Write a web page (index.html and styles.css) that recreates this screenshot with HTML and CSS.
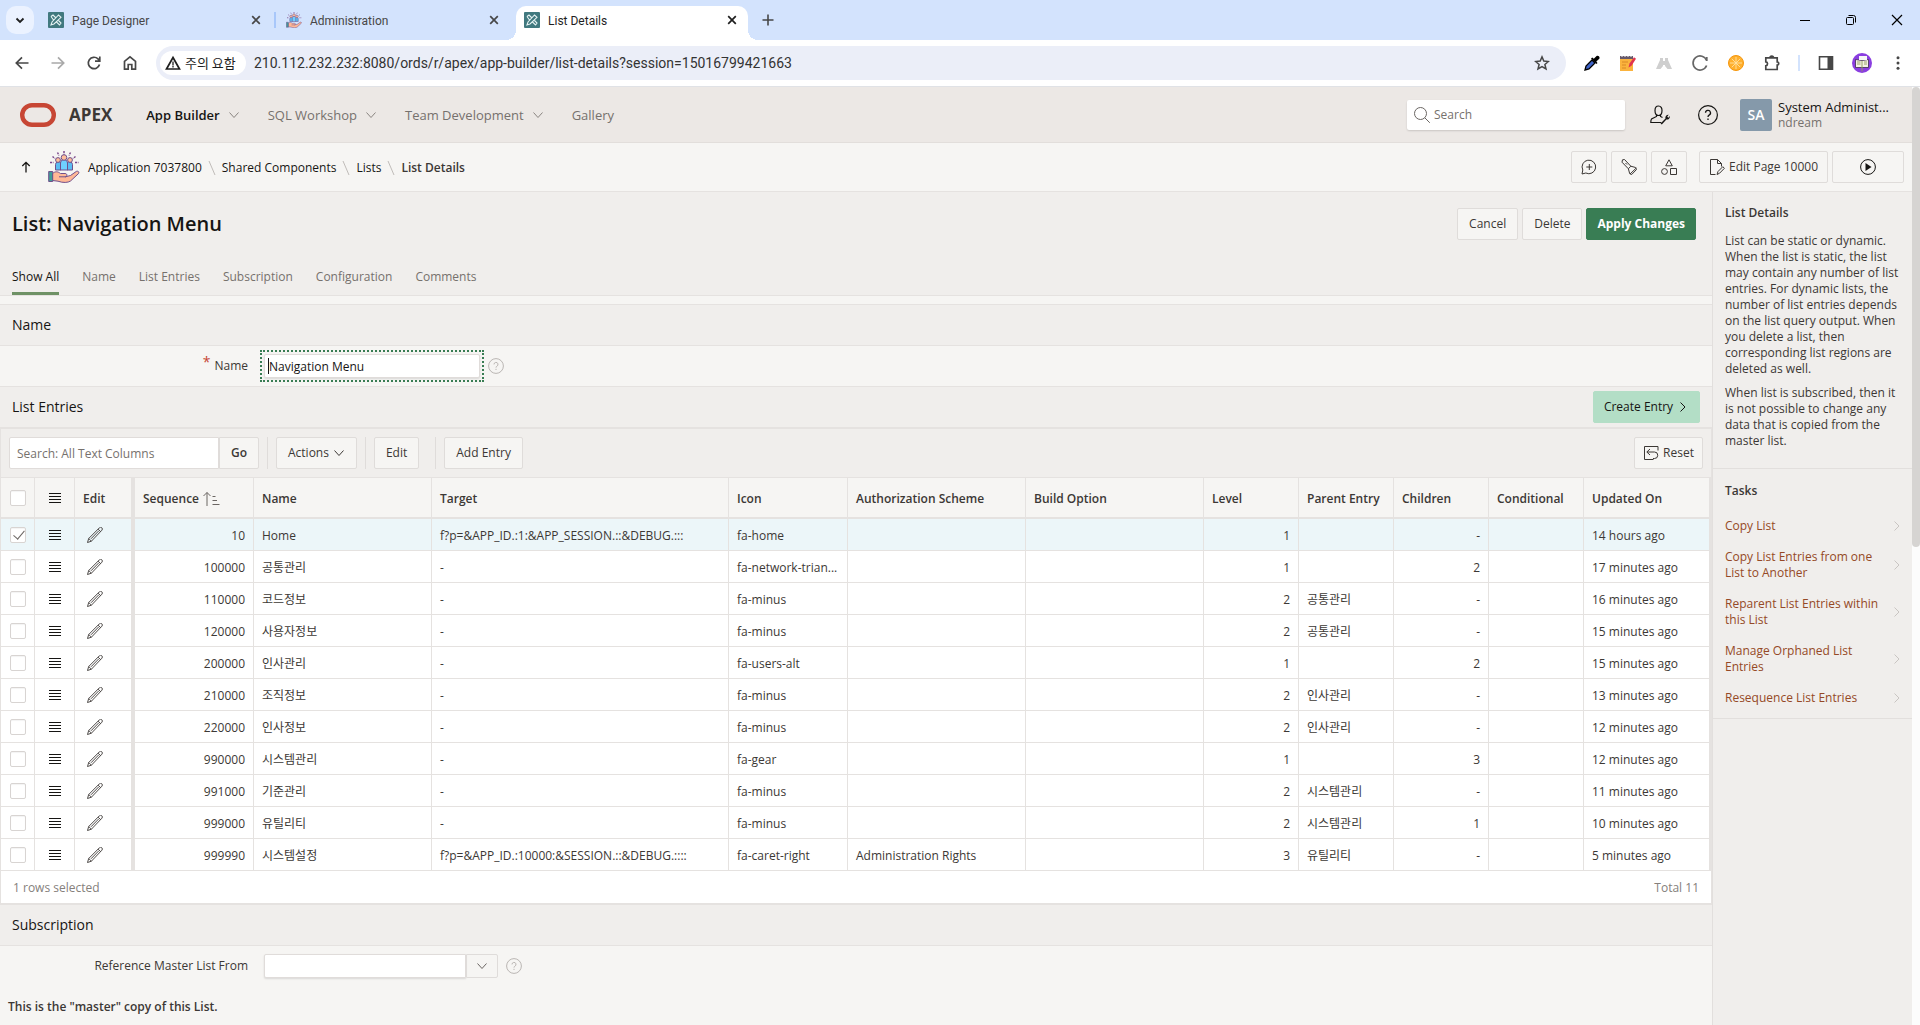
FILE: index.html
```html
<!DOCTYPE html>
<html lang="en">
<head>
<meta charset="utf-8">
<title>List Details</title>
<link rel="stylesheet" href="styles.css">
</head>
<body>
<svg class="sprite" aria-hidden="true">
  <symbol id="i-x" viewBox="0 0 16 16"><path d="M4.200 4.200l7.600 7.600M11.800 4.200l-7.600 7.600" stroke="currentColor" stroke-width="1.700"/></symbol>
  <symbol id="i-chev-down" viewBox="0 0 12 12"><path d="M1.500 3.500L6 8.500l4.500-5" fill="none" stroke="currentColor"/></symbol>
  <symbol id="i-chev-right" viewBox="0 0 12 12"><path d="M3.500 1.500L8 6l-4.500 4.500" fill="none" stroke="currentColor"/></symbol>
  <symbol id="i-slash" viewBox="0 0 8 16"><path d="M1 1l6 14" stroke="currentColor"/></symbol>
  <symbol id="i-menu" viewBox="0 0 16 16"><path d="M2 3.500h12M2 6.500h12M2 9.500h12M2 12.500h12" stroke="currentColor"/></symbol>
  <symbol id="i-pencil" viewBox="0 0 16 16"><path d="M.5 15.500l1.200-4L12.300.900a1.700 1.700 0 0 1 2.600 2.300L4.400 14.200zM1.700 11.500l2.700 2.700M11 2.200l2.700 2.400M4 11.800l7.600-7.800" fill="none" stroke="currentColor" stroke-width=".9"/></symbol>
  <symbol id="i-help" viewBox="0 0 16 16"><circle cx="8" cy="8" r="7.400" fill="none" stroke="currentColor"/><path d="M6 6.400a2 2 0 1 1 2.900 1.800c-.7.400-.9.700-.9 1.400M8 10.800v1.200" fill="none" stroke="currentColor"/></symbol>
  <symbol id="i-apex" viewBox="0 0 16 16"><rect width="16" height="16" rx="1" fill="#41797f"/><path d="M3 13l1-3 6.500-7 2.500 2.300L6 12zM3 4.500L5 3l3 3M10.500 8.500l2.500 2.500-1.500 2L8.500 10M5.500 8L3 4.500" fill="none" stroke="#e6f3f3" stroke-width="1.100"/></symbol>
  <symbol id="i-people" viewBox="0 0 32 32">
    <path d="M16 0v3.500M9.500 1.500l1.500 3M22.500 1.500l-1.500 3M4.500 5.500l2.500 2M27.500 5.500l-2.500 2M2 11.500h3.500M27 11.500h3.500" stroke="#7c4a8c" stroke-width="1.500" stroke-dasharray="2 .8"/>
    <g stroke="#70508c" stroke-width="1"><path d="M7.500 19v-5.500a3 3 0 0 1 5.500-1.500v7z" fill="#5bbcf2"/><path d="M24.500 19v-5.500a3 3 0 0 0-5.500-1.500v7z" fill="#5bbcf2"/><path d="M12.500 19v-7a3.500 3.500 0 0 1 7 0v7z" fill="#6fd0ff"/><circle cx="10" cy="9" r="2.400" fill="#ffc09c"/><circle cx="22" cy="9" r="2.400" fill="#ffc09c"/><circle cx="16" cy="6.500" r="2.800" fill="#ffc09c"/><path d="M4.500 22.500c3-2.500 5.500-2 8 0h4.500c2.500 0 2.500 3 .5 3.300l5-1.300 6-4.200c1.800-.6 3 1 2 2.300l-8 7.400c-2.500 1.800-7.500 2-12.500.200l-5.500-.7z" fill="#ffb896"/><path d="M11 25.800h7" /><path d="M.7 20.500h4v10h-4z" fill="#3f9d97"/></g>
  </symbol>
</svg>

<div class="tabstrip">
  <button class="tab-search" type="button" aria-label="Search tabs"><svg class="i16" viewBox="0 0 16 16"><path d="M4.500 6.500L8 10l3.500-3.500" fill="none" stroke="#1f1f1f" stroke-width="1.800"/></svg></button>
  <div class="tabs" role="tablist">
    <div class="tab"><svg class="i16"><use href="#i-apex"/></svg><span>Page Designer</span><button type="button" aria-label="Close tab"><svg class="i16"><use href="#i-x"/></svg></button></div>
    <div class="tab tab-divided"><svg class="i16"><use href="#i-people"/></svg><span>Administration</span><button type="button" aria-label="Close tab"><svg class="i16"><use href="#i-x"/></svg></button></div>
    <div class="tab tab-active"><svg class="i16"><use href="#i-apex"/></svg><span>List Details</span><button type="button" aria-label="Close tab"><svg class="i16"><use href="#i-x"/></svg></button></div>
  </div>
  <button class="tab-new" type="button" aria-label="New tab"><svg class="i16" viewBox="0 0 16 16"><path d="M8 2.500v11M2.500 8h11" stroke="#474747" stroke-width="1.600"/></svg></button>
  <div class="window-controls">
    <button type="button" aria-label="Minimize"><svg viewBox="0 0 12 12"><path d="M1 6.500h10" stroke="#000"/></svg></button>
    <button type="button" aria-label="Restore"><svg viewBox="0 0 12 12"><rect x="1.500" y="3.500" width="7" height="7" rx="1" fill="none" stroke="#000"/><path d="M3.500 1.500h5a2 2 0 0 1 2 2v5" fill="none" stroke="#000"/></svg></button>
    <button type="button" aria-label="Close"><svg viewBox="0 0 12 12"><path d="M1 1l10 10M11 1L1 11" stroke="#000" stroke-width="1.200"/></svg></button>
  </div>
</div>

<div class="toolbar">
  <button type="button" aria-label="Back"><svg class="i16" viewBox="0 0 16 16"><path d="M14.500 8H2.500M8 2.300L2.300 8 8 13.700" fill="none" stroke="#474747" stroke-width="1.700"/></svg></button>
  <button type="button" aria-label="Forward"><svg class="i16" viewBox="0 0 16 16"><path d="M1.500 8h12M8 2.300L13.700 8 8 13.700" fill="none" stroke="#a9a9a9" stroke-width="1.700"/></svg></button>
  <button type="button" aria-label="Reload"><svg class="i16" viewBox="0 0 16 16"><path d="M13.500 9.500A5.700 5.700 0 1 1 12 3.900l1.500 1.600M13.800 1.500v4.700H9" fill="none" stroke="#474747" stroke-width="1.700"/></svg></button>
  <button type="button" aria-label="Home"><svg class="i16" viewBox="0 0 16 16"><path d="M2.500 6.300L8 1.900l5.500 4.400v7.900h-3.700V9.500H6.200v4.700H2.500z" fill="none" stroke="#474747" stroke-width="1.700"/></svg></button>
  <div class="omnibox">
    <button class="chip" type="button"><svg class="i16" viewBox="0 0 16 16"><path d="M8 2.500L14.500 14h-13z" fill="none" stroke="#1f1f1f" stroke-width="1.700"/><path d="M8 6.500v4M8 11v1.500" stroke="#1f1f1f" stroke-width="1.300"/></svg><span>주의 요함</span></button>
    <input class="url" type="text" aria-label="Address" value="210.112.232.232:8080/ords/r/apex/app-builder/list-details?session=15016799421663">
    <button class="star" type="button" aria-label="Bookmark"><svg class="i16" viewBox="0 0 16 16"><path d="M8 1.900l1.800 4.200 4.600.400-3.500 3 1.100 4.500L8 11.600 4 14l1.100-4.500-3.500-3 4.600-.4z" fill="none" stroke="#474747" stroke-width="1.500"/></svg></button>
  </div>
  <div class="extensions">
    <button type="button" aria-label="Color picker"><svg class="i16" viewBox="0 0 16 16"><path d="M1 15l1-4 6-6 3 3-6 6z" fill="#3e63c8" stroke="#000" stroke-width="1.300"/><path d="M7 3.500L12.500 9l1-1-1.200-1.500 3-2.800c1-1.700-1-3.700-2.700-2.800L9.800 3.700 8.300 2.500z" fill="#000"/></svg></button>
    <button type="button" aria-label="Notes"><svg class="i16" viewBox="0 0 16 16"><path d="M0 3h13v13H0z" fill="#fbb33d"/><path d="M0 1h13v3H0z" fill="#675a6b"/><path d="M2 0v2M5 0v2M8 0v2M11 0v2" stroke="#fff"/><path d="M2 7h6M2 10h4M2 13h4" stroke="#d98a26"/><path d="M8.500 12.500l1-4L14 2.200l2 1.500-4.500 7z" fill="#e0344f"/></svg></button>
    <button type="button" aria-label="Compare"><svg class="i16" viewBox="0 0 16 16"><path d="M4 3h3v2H4zM9 3h3v2H9zM4 5h3v6l-2.500 3H0zM9 5h3l4 9h-4.500L9 11zM7 6h2v4H7z" fill="#cfcfcf"/></svg></button>
    <button type="button" aria-label="Refresh"><svg class="i16" viewBox="0 0 16 16"><path d="M14.600 5.500A7 7 0 1 0 14.600 10.500M14.800 2v4" fill="none" stroke="#666" stroke-width="1.700"/></svg></button>
    <button type="button" aria-label="Orange"><svg class="i16" viewBox="0 0 16 16"><circle cx="8" cy="8" r="7.500" fill="#ffb02e" stroke="#f5960c"/><path d="M8 2v12M2 8h12M3.800 3.800l8.400 8.400M12.200 3.800l-8.400 8.400" stroke="#ffe2a4" stroke-width=".9"/></svg></button>
    <button type="button" aria-label="Extensions"><svg class="i16" viewBox="0 0 16 16"><path d="M1.800 2.800h11.400v4.200c2 0 2 3.200 0 3.200v4.300H1.800v-3.700c2.300-.2 2.300-3.800 0-4zM6 2.800c0-2.200 3.500-2.200 3.500 0" fill="none" stroke="#474747" stroke-width="1.700"/></svg></button>
    <span class="ext-divider"></span>
    <button type="button" aria-label="Side panel"><svg class="i16" viewBox="0 0 16 16"><path d="M1.500 1.800h13v12.400h-13z" fill="none" stroke="#474747" stroke-width="1.600"/><path d="M9.500 1.500h5v13h-5z" fill="#474747"/></svg></button>
    <button type="button" aria-label="Profile"><svg class="i20" viewBox="0 0 20 20"><circle cx="10" cy="10" r="10" fill="#8a3ee0"/><path d="M3.500 6.500l6.500 1 6.500-1v8H3.500z" fill="#f4f1e4" stroke="#3c2b4f" stroke-width=".8"/><path d="M7 3h8v4H7z" fill="#f7f7f7"/><path d="M10 7.500v11M5 9h3.500M5 11h3.500M12 9h3M12 11h3" stroke="#8f9d5a" stroke-width=".9"/></svg></button>
    <button type="button" aria-label="Menu"><svg class="i16" viewBox="0 0 16 16"><g fill="#474747"><circle cx="8" cy="2.700" r="1.500"/><circle cx="8" cy="8" r="1.500"/><circle cx="8" cy="13.300" r="1.500"/></g></svg></button>
  </div>
</div>

<div class="viewport">
<div class="page">
  <header class="header">
    <a class="brand" href="#"><svg viewBox="0 0 36 24"><rect x="2.200" y="2.200" width="31.600" height="19.600" rx="9.800" fill="none" stroke="#c74634" stroke-width="4.400"/></svg><span>APEX</span></a>
    <nav class="mainnav">
      <a class="current" href="#">App Builder <svg class="i12"><use href="#i-chev-down"/></svg></a>
      <a href="#">SQL Workshop <svg class="i12"><use href="#i-chev-down"/></svg></a>
      <a href="#">Team Development <svg class="i12"><use href="#i-chev-down"/></svg></a>
      <a href="#">Gallery</a>
    </nav>
    <div class="search"><svg class="i16" viewBox="0 0 16 16"><circle cx="6.500" cy="6.500" r="6" fill="none" stroke="#6b6663"/><path d="M10.800 10.800l5 5" stroke="#6b6663"/></svg><input type="search" placeholder="Search" aria-label="Search"></div>
    <button class="head-icon" type="button" aria-label="Administration"><svg class="i20" viewBox="0 0 20 20"><path d="M8.500 1C6 1 5 3 5 5.500s1.200 5 3.500 5S12 8 12 5.500 11 1 8.500 1zM6.500 10v1.500L1.500 14C.8 15 .8 16 .8 17.500h10.500M10.500 10v1.500l2 1" fill="none" stroke="#161513" stroke-width="1.200"/><path d="M10.500 18.500l5-5a3 3 0 0 1 3.200-3.800l-1.500 2 1.200 1 1.500-1.700a3 3 0 0 1-3.500 3.500l-4.600 5z" fill="#161513"/></svg></button>
    <button class="head-icon" type="button" aria-label="Help"><svg class="i20" viewBox="0 0 20 20"><circle cx="10" cy="10" r="9.400" fill="none" stroke="#161513" stroke-width="1.200"/><path d="M7.500 7.800a2.500 2.500 0 1 1 3.600 2.300c-.8.500-1.100.9-1.100 1.900M10 13.500V15" fill="none" stroke="#161513" stroke-width="1.300"/></svg></button>
    <button class="user" type="button"><span class="avatar">SA</span><span class="user-text"><span class="user-name">System Administ...</span><span class="user-ws">ndream</span></span></button>
  </header>

  <div class="crumbbar">
    <a class="up" href="#" aria-label="Up"><svg class="i12" viewBox="0 0 12 12"><path d="M6 11.500V1.500M2.300 5L6 1.300 9.700 5" fill="none" stroke="#161513" stroke-width="1.300"/></svg></a>
    <svg class="app-icon"><use href="#i-people"/></svg>
    <nav class="crumbs">
      <a href="#">Application 7037800</a><svg><use href="#i-slash"/></svg>
      <a href="#">Shared Components</a><svg><use href="#i-slash"/></svg>
      <a href="#">Lists</a><svg><use href="#i-slash"/></svg>
      <strong>List Details</strong>
    </nav>
    <div class="page-tools">
      <button class="btn square" type="button" aria-label="Feedback"><svg class="i16" viewBox="0 0 16 16"><path d="M1 15l.8-4A6.800 6.800 0 1 1 4.800 14zM8.300 5v6M5.300 8h6" fill="none" stroke="currentColor"/></svg></button>
      <button class="btn square" type="button" aria-label="Find"><svg class="i16" viewBox="0 0 16 16"><path d="M1.500.8l2-.3L9.800 7.200l4.800 1.300.9 2-4.800 5-2-.8-1.300-4.900L1 3.200zM7.400 9.800l2.400-2.600M9 15l6.300-6M4.500 4l1.500 1.500" fill="none" stroke="currentColor"/></svg></button>
      <button class="btn square" type="button" aria-label="Shared components"><svg class="i16" viewBox="0 0 16 16"><path d="M8 .8l3.300 6H4.700zM9.500 9.500h6v6h-6z" fill="none" stroke="currentColor"/><circle cx="3.500" cy="12.500" r="2.900" fill="none" stroke="currentColor"/></svg></button>
      <button class="btn edit-page" type="button"><svg class="i16" viewBox="0 0 16 16"><path d="M6.500 15.500h-5V.5h7l4 4v3M8.500.5v4h4M8 15.500l1-3 4.800-4.800 1.600 1.600-4.800 4.900z" fill="none" stroke="currentColor"/></svg>Edit Page 10000</button>
      <button class="btn run" type="button" aria-label="Run page"><svg class="i16" viewBox="0 0 16 16"><circle cx="8" cy="8" r="7.400" fill="none" stroke="#161513"/><path d="M5.500 4l6 4-6 4z" fill="#161513"/></svg></button>
    </div>
  </div>

  <div class="columns">
  <main class="main">
    <div class="title-area">
      <div class="title-row">
        <h1>List: Navigation Menu</h1>
        <button class="btn" type="button">Cancel</button>
        <button class="btn" type="button">Delete</button>
        <button class="btn hot" type="button">Apply Changes</button>
      </div>
      <nav class="subtabs">
        <a class="current" href="#">Show All</a><a href="#">Name</a><a href="#">List Entries</a><a href="#">Subscription</a><a href="#">Configuration</a><a href="#">Comments</a>
      </nav>
    </div>

    <section>
      <div class="region-head"><h2>Name</h2></div>
      <div class="field">
        <label for="list-name"><span class="required">*</span>Name</label>
        <span class="focus-field"><input id="list-name" type="text" value="Navigation Menu"><span class="caret"></span></span>
        <button class="help" type="button" aria-label="Help"><svg class="i16"><use href="#i-help"/></svg></button>
      </div>
    </section>

    <section>
      <div class="region-head"><h2>List Entries</h2><button class="btn create" type="button">Create Entry <svg class="i12"><use href="#i-chev-right"/></svg></button></div>
      <div class="grid">
        <div class="grid-tools">
          <input class="grid-search" type="text" placeholder="Search: All Text Columns" aria-label="Search all text columns"><button class="btn go" type="button">Go</button>
          <span class="rule"></span>
          <button class="btn" type="button">Actions <svg class="i12"><use href="#i-chev-down"/></svg></button>
          <span class="rule"></span>
          <button class="btn" type="button">Edit</button>
          <span class="rule wide"></span>
          <button class="btn" type="button">Add Entry</button>
          <button class="btn reset" type="button"><svg class="i16" viewBox="0 0 16 16"><path d="M15 5.500V1.500H1.500v13h9M7 4L3.800 7 7 10M4 7h7.500a3.200 3.200 0 0 1 0 6.500H10" fill="none" stroke="currentColor"/></svg>Reset</button>
        </div>
        <table>
          <colgroup><col class="c-check"><col class="c-menu"><col class="c-edit"><col class="c-m"><col class="c-l"><col><col class="c-m"><col class="c-l"><col class="c-l"><col class="c-s"><col class="c-s"><col class="c-s"><col class="c-s"><col class="c-date"></colgroup>
          <thead><tr><th class="ck"><input type="checkbox" aria-label="Select all"></th><th class="ic"><svg class="i16"><use href="#i-menu"/></svg></th><th class="frozen">Edit</th><th>Sequence <svg class="sort" viewBox="0 0 18 16"><path d="M5 15V1.500M1.500 5L5 1.500 8.500 5M10.500 5.500h3M10.500 9.500h4.500M10.500 13.500h7" fill="none" stroke="#6b6663"/></svg></th><th>Name</th><th>Target</th><th>Icon</th><th>Authorization Scheme</th><th>Build Option</th><th>Level</th><th>Parent Entry</th><th>Children</th><th>Conditional</th><th>Updated On</th></tr></thead>
          <tbody>
            <tr class="selected"><td class="ck"><input type="checkbox" aria-label="Select row" checked></td><td class="ic"><svg class="i16"><use href="#i-menu"/></svg></td><td class="frozen"><svg class="i16"><use href="#i-pencil"/></svg></td><td class="num">10</td><td>Home</td><td>f?p=&amp;APP_ID.:1:&amp;APP_SESSION.::&amp;DEBUG.:::</td><td>fa-home</td><td></td><td></td><td class="num">1</td><td></td><td class="num">-</td><td></td><td>14 hours ago</td></tr>
            <tr><td class="ck"><input type="checkbox" aria-label="Select row"></td><td class="ic"><svg class="i16"><use href="#i-menu"/></svg></td><td class="frozen"><svg class="i16"><use href="#i-pencil"/></svg></td><td class="num">100000</td><td>공통관리</td><td>-</td><td>fa-network-trian...</td><td></td><td></td><td class="num">1</td><td></td><td class="num">2</td><td></td><td>17 minutes ago</td></tr>
            <tr><td class="ck"><input type="checkbox" aria-label="Select row"></td><td class="ic"><svg class="i16"><use href="#i-menu"/></svg></td><td class="frozen"><svg class="i16"><use href="#i-pencil"/></svg></td><td class="num">110000</td><td>코드정보</td><td>-</td><td>fa-minus</td><td></td><td></td><td class="num">2</td><td>공통관리</td><td class="num">-</td><td></td><td>16 minutes ago</td></tr>
            <tr><td class="ck"><input type="checkbox" aria-label="Select row"></td><td class="ic"><svg class="i16"><use href="#i-menu"/></svg></td><td class="frozen"><svg class="i16"><use href="#i-pencil"/></svg></td><td class="num">120000</td><td>사용자정보</td><td>-</td><td>fa-minus</td><td></td><td></td><td class="num">2</td><td>공통관리</td><td class="num">-</td><td></td><td>15 minutes ago</td></tr>
            <tr><td class="ck"><input type="checkbox" aria-label="Select row"></td><td class="ic"><svg class="i16"><use href="#i-menu"/></svg></td><td class="frozen"><svg class="i16"><use href="#i-pencil"/></svg></td><td class="num">200000</td><td>인사관리</td><td>-</td><td>fa-users-alt</td><td></td><td></td><td class="num">1</td><td></td><td class="num">2</td><td></td><td>15 minutes ago</td></tr>
            <tr><td class="ck"><input type="checkbox" aria-label="Select row"></td><td class="ic"><svg class="i16"><use href="#i-menu"/></svg></td><td class="frozen"><svg class="i16"><use href="#i-pencil"/></svg></td><td class="num">210000</td><td>조직정보</td><td>-</td><td>fa-minus</td><td></td><td></td><td class="num">2</td><td>인사관리</td><td class="num">-</td><td></td><td>13 minutes ago</td></tr>
            <tr><td class="ck"><input type="checkbox" aria-label="Select row"></td><td class="ic"><svg class="i16"><use href="#i-menu"/></svg></td><td class="frozen"><svg class="i16"><use href="#i-pencil"/></svg></td><td class="num">220000</td><td>인사정보</td><td>-</td><td>fa-minus</td><td></td><td></td><td class="num">2</td><td>인사관리</td><td class="num">-</td><td></td><td>12 minutes ago</td></tr>
            <tr><td class="ck"><input type="checkbox" aria-label="Select row"></td><td class="ic"><svg class="i16"><use href="#i-menu"/></svg></td><td class="frozen"><svg class="i16"><use href="#i-pencil"/></svg></td><td class="num">990000</td><td>시스템관리</td><td>-</td><td>fa-gear</td><td></td><td></td><td class="num">1</td><td></td><td class="num">3</td><td></td><td>12 minutes ago</td></tr>
            <tr><td class="ck"><input type="checkbox" aria-label="Select row"></td><td class="ic"><svg class="i16"><use href="#i-menu"/></svg></td><td class="frozen"><svg class="i16"><use href="#i-pencil"/></svg></td><td class="num">991000</td><td>기준관리</td><td>-</td><td>fa-minus</td><td></td><td></td><td class="num">2</td><td>시스템관리</td><td class="num">-</td><td></td><td>11 minutes ago</td></tr>
            <tr><td class="ck"><input type="checkbox" aria-label="Select row"></td><td class="ic"><svg class="i16"><use href="#i-menu"/></svg></td><td class="frozen"><svg class="i16"><use href="#i-pencil"/></svg></td><td class="num">999000</td><td>유틸리티</td><td>-</td><td>fa-minus</td><td></td><td></td><td class="num">2</td><td>시스템관리</td><td class="num">1</td><td></td><td>10 minutes ago</td></tr>
            <tr><td class="ck"><input type="checkbox" aria-label="Select row"></td><td class="ic"><svg class="i16"><use href="#i-menu"/></svg></td><td class="frozen"><svg class="i16"><use href="#i-pencil"/></svg></td><td class="num">999990</td><td>시스템설정</td><td>f?p=&amp;APP_ID.:10000:&amp;SESSION.::&amp;DEBUG.::::</td><td>fa-caret-right</td><td>Administration Rights</td><td></td><td class="num">3</td><td>유틸리티</td><td class="num">-</td><td></td><td>5 minutes ago</td></tr>
          </tbody>
        </table>
        <div class="grid-foot"><span>1 rows selected</span><span>Total 11</span></div>
      </div>
    </section>

    <section>
      <div class="region-head"><h2>Subscription</h2></div>
      <div class="field">
        <label for="master">Reference Master List From</label>
        <span class="combo"><input id="master" type="text"><button type="button" aria-label="Open list"><svg class="i12"><use href="#i-chev-down"/></svg></button></span>
        <button class="help" type="button" aria-label="Help"><svg class="i16"><use href="#i-help"/></svg></button>
      </div>
      <p class="note">This is the "master" copy of this List.</p>
    </section>
  </main>

  <aside class="side">
    <section class="about">
      <h3>List Details</h3>
      <p>List can be static or dynamic. When the list is static, the list may contain any number of list entries. For dynamic lists, the number of list entries depends on the list query output. When you delete a list, then corresponding list regions are deleted as well.</p>
      <p>When list is subscribed, then it is not possible to change any data that is copied from the master list.</p>
    </section>
    <section class="tasks">
      <h3>Tasks</h3>
      <ul>
        <li><a href="#"><span>Copy List</span><svg class="i12"><use href="#i-chev-right"/></svg></a></li>
        <li><a href="#"><span>Copy List Entries from one List to Another</span><svg class="i12"><use href="#i-chev-right"/></svg></a></li>
        <li><a href="#"><span>Reparent List Entries within this List</span><svg class="i12"><use href="#i-chev-right"/></svg></a></li>
        <li><a href="#"><span>Manage Orphaned List Entries</span><svg class="i12"><use href="#i-chev-right"/></svg></a></li>
        <li><a href="#"><span>Resequence List Entries</span><svg class="i12"><use href="#i-chev-right"/></svg></a></li>
      </ul>
    </section>
  </aside>
  </div>
</div>
<div class="scrollbar"><div class="thumb"></div></div>
</div>
</body>
</html>
```
FILE: styles.css
```css
* { box-sizing: border-box; }
body {
  margin: 0;
  height: 100vh;
  display: flex;
  flex-direction: column;
  overflow: hidden;
  background: #fff;
  color: #3c3835;
  font: 12px/16px "Open Sans", "Noto Sans CJK KR", sans-serif;
}
button, input { font: inherit; color: inherit; margin: 0; }
button { border: 0; padding: 0; background: none; }
a { color: inherit; text-decoration: none; }
h1, h2, h3, p, ul { margin: 0; padding: 0; }
ul { list-style: none; }
svg { display: block; flex: none; }
.sprite { position: absolute; width: 0; height: 0; }
.i12 { width: 12px; height: 12px; }
.i16 { width: 16px; height: 16px; }
.i20 { width: 20px; height: 20px; }

/* browser tabs */
.tabstrip {
  flex: none;
  display: flex;
  height: 40px;
  padding-left: 6px;
  background: #d3e3fd;
  font-family: Roboto, "Noto Sans CJK KR", sans-serif;
}
.tab-search {
  width: 28px;
  height: 28px;
  margin-top: 6px;
  display: grid;
  place-items: center;
  border-radius: 10px;
  background: #ebf2ff;
}
.tabs { display: flex; margin-left: 6px; padding-top: 6px; }
.tab {
  position: relative;
  display: flex;
  align-items: center;
  gap: 8px;
  width: 238px;
  height: 34px;
  padding: 0 14px 6px 8px;
  color: #474747;
}
.tab span { flex: 1; padding-top: 2px; }
.tab-divided::before {
  content: "";
  position: absolute;
  left: -4px;
  top: 6px;
  width: 2px;
  height: 16px;
  background: #a8c7fa;
}
.tab-active {
  width: 232px;
  padding-right: 8px;
  border-radius: 10px 10px 0 0;
  background: #fff;
  color: #1f1f1f;
}
.tab-active::before, .tab-active::after {
  content: "";
  position: absolute;
  bottom: 0;
  width: 10px;
  height: 10px;
}
.tab-active::before { left: -10px; background: radial-gradient(circle at 0 0, #d3e3fd 10px, #fff 10px); }
.tab-active::after { right: -10px; background: radial-gradient(circle at 100% 0, #d3e3fd 10px, #fff 10px); }
.tab-new { width: 28px; height: 40px; margin-left: 6px; display: grid; place-items: center; }
.window-controls { display: flex; margin-left: auto; }
.window-controls button { width: 46px; height: 40px; display: grid; place-items: center; }
.window-controls svg { width: 12px; height: 12px; }

/* address bar */
.toolbar {
  flex: none;
  display: flex;
  align-items: center;
  height: 47px;
  padding: 0 4px;
  border-bottom: 1px solid #e0e2e6;
  background: #fff;
}
.toolbar > button, .extensions button { width: 36px; height: 34px; display: grid; place-items: center; }
.omnibox {
  flex: 1;
  display: flex;
  align-items: center;
  height: 34px;
  margin: 0 8px;
  padding: 0 16px 0 4px;
  border-radius: 17px;
  background: #ebeef8;
}
.chip {
  display: flex;
  align-items: center;
  gap: 4px;
  width: 86px;
  height: 24px;
  padding: 0 5px;
  border-radius: 12px;
  background: #fff;
  color: #1f1f1f;
  font: 13px/16px "Noto Sans CJK KR", sans-serif;
  white-space: nowrap;
}
.url {
  flex: 1;
  padding: 0;
  margin-left: 8px;
  border: 0;
  background: none;
  color: #333;
  font: 14px/20px Roboto, sans-serif;
}
.extensions { display: flex; align-items: center; }
.ext-divider { width: 2px; height: 16px; margin: 0 8px; background: #d3e3fd; }

/* page and its scroll bar */
.viewport { flex: 1; min-height: 0; display: flex; }
.page { flex: 1; min-width: 0; display: flex; flex-direction: column; background: #f6f5f3; }
.scrollbar { width: 8px; background: #fcfcfc; }
.thumb { height: 49%; border-radius: 4px; background: #d6d4d2; }

.header {
  flex: none;
  display: flex;
  align-items: center;
  height: 56px;
  padding: 0 8px 0 20px;
  border-bottom: 1px solid #e2dedb;
  background: #ece8e5;
  font-size: 13px;
}
.brand { display: flex; align-items: center; gap: 13px; color: #3c3835; font-size: 17px; font-weight: 700; }
.brand svg { width: 36px; height: 24px; }
.mainnav { display: flex; gap: 28px; margin-left: 34px; margin-right: auto; color: #76716d; }
.mainnav a { display: flex; align-items: center; gap: 8px; padding-top: 1px; }
.mainnav .current { color: #161513; font-weight: 600; }
.mainnav svg { color: #8a8581; }
.search {
  display: flex;
  align-items: center;
  width: 218px;
  height: 30px;
  padding: 0 7px;
  border-radius: 2px;
  background: #fff;
  box-shadow: 0 1px 2px #00000026;
}
.search input { flex: 1; min-width: 0; padding: 0 4px; border: 0; outline: 0; background: none; font-size: 12px; }
::placeholder { color: #76716d; opacity: 1; }
.head-icon { width: 48px; height: 32px; display: grid; place-items: center; }
.search + .head-icon { margin-left: 11px; }
.user { display: flex; align-items: center; gap: 6px; margin-left: 8px; text-align: left; }
.avatar {
  width: 32px;
  height: 32px;
  display: grid;
  place-items: center;
  border-radius: 2px;
  background: #8599aa;
  color: #fff;
  font-size: 14px;
  font-weight: 600;
}
.user-text { display: flex; flex-direction: column; width: 126px; white-space: nowrap; }
.user-name { color: #161513; font-size: 13px; font-weight: 500; }
.user-ws { color: #76716d; font-size: 12px; }

.crumbbar {
  flex: none;
  display: flex;
  align-items: center;
  height: 49px;
  padding: 0 8px 0 20px;
  border-bottom: 1px solid #e5e2e0;
  color: #161513;
}
.app-icon { width: 32px; height: 32px; margin-left: 16px; }
.crumbs { display: flex; align-items: center; gap: 6px; margin: 0 auto 0 8px; padding-top: 2px; }
.crumbs svg { width: 8px; height: 16px; color: #c0bcb9; }
.crumbs strong { color: #3c3835; font-weight: 600; }
.page-tools { display: flex; gap: 4px; }

.btn {
  display: inline-flex;
  align-items: center;
  justify-content: center;
  gap: 4px;
  height: 32px;
  padding: 0 11px;
  border: 1px solid #dfdcda;
  border-radius: 2px;
  background: #f6f5f3;
  color: #3c3835;
  white-space: nowrap;
}
.square { width: 36px; padding: 0; }
.edit-page { margin-left: 8px; width: 129px; }
.run { width: 72px; }
.hot { border-color: #397d54; background: #397d54; color: #fff; font-weight: 700; padding: 0 10px; }
.create { border-color: #b3dec6; background: #b3dec6; color: #161513; width: 107px; }

.columns { flex: 1; min-height: 0; display: flex; }
.main { flex: 1; min-width: 0; }
.title-area { padding: 16px 16px 0 12px; border-bottom: 1px solid #e5e2e0; margin-bottom: 8px; background: #f0eeec; }
.title-row { display: flex; align-items: center; gap: 4px; }
h1 { margin-right: auto; color: #161513; font-size: 20px; font-weight: 600; line-height: 32px; }
.subtabs { display: flex; gap: 23px; margin-top: 19px; color: #76716d; }
.subtabs a { display: flex; align-items: center; height: 36px; padding-top: 3px; border-bottom: 3px solid transparent; }
.subtabs .current { border-color: #6f9266; color: #161513; }

.region-head {
  display: flex;
  align-items: center;
  justify-content: space-between;
  height: 42px;
  padding: 0 12px;
  border-top: 1px solid #e5e2e0;
  border-bottom: 1px solid #e5e2e0;
  background: #f0eeec;
}
h2 { color: #161513; font-size: 14px; font-weight: 500; }
.field { display: flex; align-items: center; height: 40px; }
.field label { display: flex; justify-content: flex-end; gap: 4px; width: 264px; padding-right: 16px; }
.required { color: #c74634; font-size: 14px; line-height: 8px; }
.focus-field { position: relative; width: 216px; height: 24px; outline: 2px dotted #397d54; outline-offset: 2px; }
.field input {
  width: 100%;
  height: 24px;
  padding: 0 4px;
  border: 1px solid #e0dcda;
  border-radius: 2px;
  background: #fff;
  box-shadow: 0 1px 2px #0000001f;
  color: #161513;
}
.caret { position: absolute; left: 4px; top: 4px; width: 1px; height: 16px; background: #161513; }
.help { margin-left: 8px; color: #bab6b3; }
.combo { display: flex; width: 234px; }
.combo input { flex: 1; min-width: 0; border-radius: 2px 0 0 2px; }
.combo button { display: grid; place-items: center; width: 32px; height: 24px; border: 1px solid #dfdcda; border-radius: 0 2px 2px 0; color: #6b6663; }
.note { padding: 13px 8px; font-weight: 600; }

/* entries grid */
.grid { border: 1px solid #e5e2e0; background: #fff; }
.grid-tools { display: flex; align-items: center; height: 49px; padding: 0 8px; border-bottom: 1px solid #e5e2e0; background: #f0eeec; }
.grid-search { width: 210px; height: 32px; padding: 0 7px; border: 1px solid #e0dcda; border-radius: 2px 0 0 2px; background: #fff; }
.go { width: 40px; border-radius: 0 2px 2px 0; font-weight: 600; }
.rule { width: 1px; height: 32px; margin: 0 8px; background: #dfdcda; }
.rule.wide { margin-left: 16px; }
.reset { margin-left: auto; padding: 0 8px; }
table { width: 100%; table-layout: fixed; border-collapse: separate; border-spacing: 0; }
.c-check { width: 34px; }
.c-menu { width: 40px; }
.c-edit { width: 60px; }
.c-s { width: 95px; }
.c-m { width: 119px; }
.c-l { width: 178px; }
.c-date { width: 127px; }
th, td {
  height: 32px;
  padding: 2px 8px 0;
  overflow: hidden;
  border-right: 1px solid #e5e2e0;
  border-bottom: 1px solid #e5e2e0;
  text-align: left;
  text-overflow: ellipsis;
  white-space: nowrap;
}
th { height: 41px; border-bottom-width: 2px; background: #f6f5f3; font-weight: 600; }
th:last-child, td:last-child { border-right-width: 2px; }
.frozen { border-right-width: 4px; }
td.frozen { padding: 0 12px; }
.ic { padding: 0 12px; color: #161513; }
.ck { padding: 0 9px; }
.num { text-align: right; }
.sort { display: inline-block; width: 18px; height: 16px; vertical-align: -4px; }
.selected td { background: #ecf6f9; }
input[type="checkbox"] {
  appearance: none;
  display: block;
  width: 16px;
  height: 16px;
  border: 1px solid #d8d4d2;
  border-radius: 2px;
  background: #fff;
  box-shadow: inset 0 1px 1px #0000000d;
}
input[type="checkbox"]:checked::before {
  content: "";
  display: block;
  width: 5px;
  height: 10px;
  margin: 0 0 0 5px;
  border: solid #6b6663;
  border-width: 0 1px 1px 0;
  transform: rotate(40deg);
}
.grid-foot { display: flex; justify-content: space-between; padding: 9px 12px 7px; color: #85807c; }

/* help and tasks */
.side { width: 200px; border-left: 1px solid #e2dfdd; background: #f0eeec; }
.side h3 { font-size: 12px; font-weight: 600; line-height: 16px; }
.about { padding: 13px 8px 19px 12px; border-bottom: 1px solid #e2dfdd; }
.about h3 { margin-bottom: 12px; }
.about p + p { margin-top: 8px; }
.tasks { padding: 14px 0 4px; border-bottom: 1px solid #e2dfdd; }
.tasks h3 { margin: 0 12px 12px; }
.tasks a { display: flex; align-items: center; justify-content: space-between; padding: 7px 9px 8px 12px; color: #954926; }
.tasks span { max-width: 160px; }
.tasks svg { color: #c9c5c2; }
```
